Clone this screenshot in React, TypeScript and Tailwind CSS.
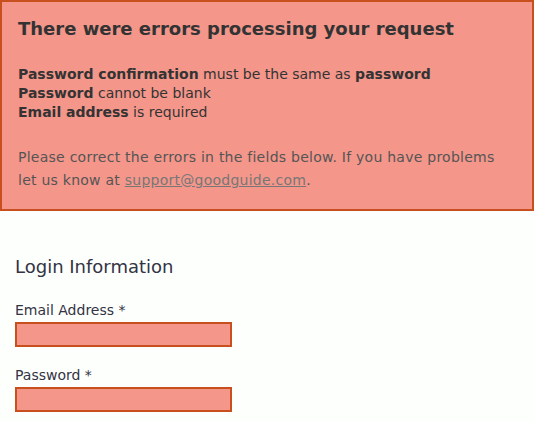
import React from "react";

const font = { fontFamily: '"DejaVu Sans", Verdana, sans-serif' };

const Field = ({ label }: { label: string }) => (
  <div className="flex flex-col">
    <label className="text-[14px] leading-[18px] text-[#333344]">{label} *</label>
    <input className="mt-[3px] w-[217px] h-[25px] border-2 border-[#c8501e] bg-[#f4978a] outline-none" />
  </div>
);

const App = () => {
  return (
    <div className="min-h-screen w-[534px] bg-[#fdfffd]" style={font}>
      <div className="border-2 border-[#c8501e] bg-[#f4968a] h-[211px] pl-[16px] pr-[30px] pt-[14px]">
        <h2 className="text-[18px] font-bold leading-[26px] text-[#333333]">
          There were errors processing your request
        </h2>
        <ul className="mt-[23px] text-[14px] leading-[19px] text-[#333333]">
          <li>
            <b>Password confirmation</b> must be the same as <b>password</b>
          </li>
          <li>
            <b>Password</b> cannot be blank
          </li>
          <li>
            <b>Email address</b> is required
          </li>
        </ul>
        <p className="mt-[24px] text-[14px] leading-[23px] tracking-[0.25px] text-[#555555]">
          Please correct the errors in the fields below. If you have problems let us know at{" "}
          <a href="#" className="text-[#777777] underline">
            support@goodguide.com
          </a>
          .
        </p>
      </div>
      <div className="px-[15px] pt-[44px]">
        <h3 className="text-[18px] leading-[24px] text-[#333344]">Login Information</h3>
        <div className="mt-[22px] flex flex-col gap-[19px]">
          <Field label="Email Address" />
          <Field label="Password" />
        </div>
      </div>
    </div>
  );
};

export default App;
